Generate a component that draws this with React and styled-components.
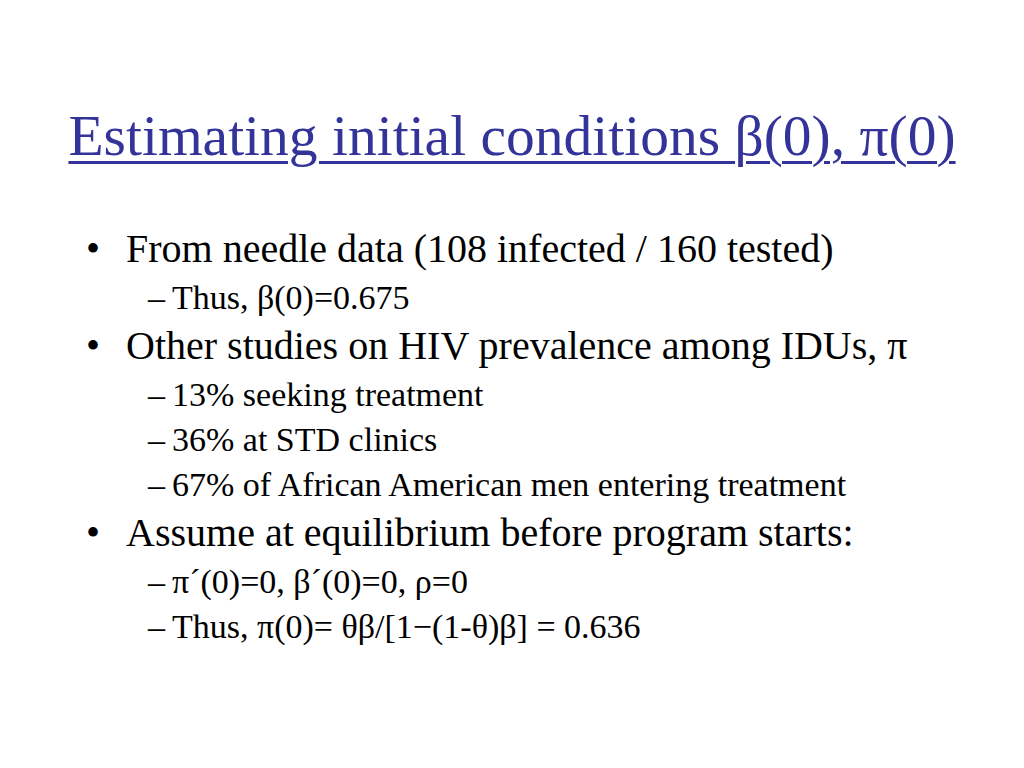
import React from 'react';
import styled, { createGlobalStyle } from 'styled-components';

const GlobalStyle = createGlobalStyle`
  html, body {
    margin: 0;
    padding: 0;
    background: #ffffff;
  }
  body {
    font-family: "Liberation Serif", "Times New Roman", serif;
    color: #000000;
  }
`;

const Slide = styled.div`
  width: 1024px;
  height: 768px;
  box-sizing: border-box;
  padding-top: 104px;
  background: #ffffff;
  overflow: hidden;
`;

const Title = styled.h1`
  margin: 0;
  text-align: center;
  font-weight: normal;
  font-size: 57.5px;
  line-height: 64px;
  color: #333399;
  text-decoration: underline;
  text-decoration-thickness: 3px;
  text-underline-offset: 6px;
`;

const List = styled.ul`
  list-style: none;
  margin: 0;
  padding: 0 0 0 86px;
  margin-top: 55px;
`;

const Item = styled.li`
  display: flex;
  font-size: ${p => (p.sub ? '34px' : '40px')};
  line-height: ${p => (p.sub ? '45px' : '52px')};
  padding-left: ${p => (p.sub ? '62px' : '0')};
`;

const Marker = styled.span`
  flex: none;
  width: ${p => (p.sub ? '24px' : '40px')};
`;

const rows = [
  { text: 'From needle data (108 infected / 160 tested)' },
  { sub: true, text: 'Thus, β(0)=0.675' },
  { text: 'Other studies on HIV prevalence among IDUs, π' },
  { sub: true, text: '13% seeking treatment' },
  { sub: true, text: '36% at STD clinics' },
  { sub: true, text: '67% of African American men entering treatment' },
  { text: 'Assume at equilibrium before program starts:' },
  { sub: true, text: 'π´(0)=0, β´(0)=0, ρ=0' },
  { sub: true, text: 'Thus, π(0)= θβ/[1−(1-θ)β] = 0.636' },
];

export default function App() {
  return (
    <>
      <GlobalStyle />
      <Slide>
        <Title>Estimating initial conditions β(0), π(0)</Title>
        <List>
          {rows.map((row, i) => (
            <Item key={i} sub={row.sub}>
              <Marker sub={row.sub}>{row.sub ? '–' : '•'}</Marker>
              <span>{row.text}</span>
            </Item>
          ))}
        </List>
      </Slide>
    </>
  );
}
